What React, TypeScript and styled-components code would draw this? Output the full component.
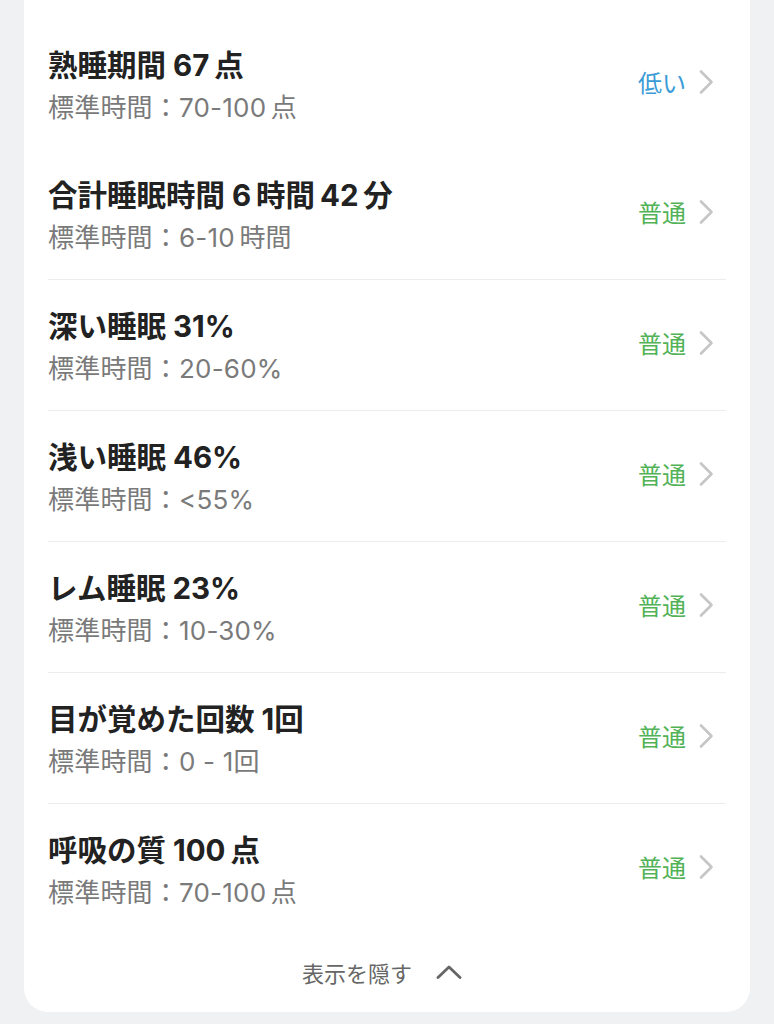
import React from "react";
import styled, { createGlobalStyle } from "styled-components";

const Global = createGlobalStyle`
  html, body {
    margin: 0;
    padding: 0;
    background: #f0f1f3;
    overflow: hidden;
  }
  body {
    font-family: "Inter", "Noto Sans CJK JP", sans-serif;
    -webkit-font-smoothing: antialiased;
  }
`;

const Page = styled.div`
  padding: 0 24px 14px;
`;

const Card = styled.div`
  background: #ffffff;
  border-radius: 0 0 24px 24px;
  padding-top: 19px;
`;

const List = styled.div`
  display: flex;
  flex-direction: column;
  margin: 0 24px;
`;

const Row = styled.div<{ $divider: boolean }>`
  display: flex;
  align-items: center;
  height: 130px;
  border-top: ${(p) => (p.$divider ? "1px solid #ececec" : "none")};
`;

const Info = styled.div`
  display: flex;
  flex-direction: column;
  gap: 8px;
  flex: 1;
  padding-top: 4px;
`;

const Title = styled.div`
  font-family: "Inter", "Noto Sans CJK JP", sans-serif;
  font-size: 29.5px;
  line-height: 36px;
  font-weight: 700;
  color: #222222;
`;

const Sub = styled.div`
  font-family: "Inter", "Noto Sans CJK JP", sans-serif;
  font-size: 26px;
  line-height: 34px;
  font-weight: 400;
  color: #7a7a7a;
  letter-spacing: 0.2px;
`;

const Status = styled.div<{ $tone: "low" | "normal" }>`
  display: flex;
  align-items: center;
  gap: 12px;
  padding-right: 12px;
  margin-bottom: 5px;
  font-family: "Noto Sans CJK JP", sans-serif;
  font-size: 24px;
  line-height: 30px;
  color: ${(p) => (p.$tone === "low" ? "#3a9bd6" : "#52b257")};
`;

const Footer = styled.div`
  display: flex;
  align-items: center;
  justify-content: center;
  gap: 24px;
  height: 76px;
  padding-right: 10px;
  padding-bottom: 2px;
  font-family: "Noto Sans CJK JP", sans-serif;
  font-size: 22px;
  color: #666666;
`;

const ChevronRight = () => (
  <svg width="16" height="26" viewBox="0 0 16 26" fill="none">
    <path d="M3 2.5 L13.5 13 L3 23.5" stroke="#c6c6c6" strokeWidth="2.6" strokeLinecap="round" strokeLinejoin="round" />
  </svg>
);

const ChevronUp = () => (
  <svg width="26" height="14" viewBox="0 0 26 14" fill="none">
    <path d="M2 12.5 L13 2 L24 12.5" stroke="#666666" strokeWidth="2.8" strokeLinecap="round" strokeLinejoin="round" />
  </svg>
);

type Item = { title: string; sub: string; status: string; tone: "low" | "normal" };

const items: Item[] = [
  { title: "熟睡期間 67\u2006点", sub: "標準時間：70-100\u2006点", status: "低い", tone: "low" },
  { title: "合計睡眠時間 6\u2006時間\u200642\u2006分", sub: "標準時間：6-10\u2006時間", status: "普通", tone: "normal" },
  { title: "深い睡眠 31%", sub: "標準時間：20-60%", status: "普通", tone: "normal" },
  { title: "浅い睡眠 46%", sub: "標準時間：<55%", status: "普通", tone: "normal" },
  { title: "レム睡眠 23%", sub: "標準時間：10-30%", status: "普通", tone: "normal" },
  { title: "目が覚めた回数 1回", sub: "標準時間：0 - 1回", status: "普通", tone: "normal" },
  { title: "呼吸の質 100\u2006点", sub: "標準時間：70-100\u2006点", status: "普通", tone: "normal" },
];

export default function App() {
  return (
    <>
      <Global />
      <Page>
        <Card>
          <List>
            {items.map((it, i) => (
              <Row key={i} $divider={i >= 2}>
                <Info>
                  <Title>{it.title}</Title>
                  <Sub>{it.sub}</Sub>
                </Info>
                <Status $tone={it.tone}>
                  <span>{it.status}</span>
                  <ChevronRight />
                </Status>
              </Row>
            ))}
          </List>
          <Footer>
            <span>表示を隠す</span>
            <ChevronUp />
          </Footer>
        </Card>
      </Page>
    </>
  );
}
